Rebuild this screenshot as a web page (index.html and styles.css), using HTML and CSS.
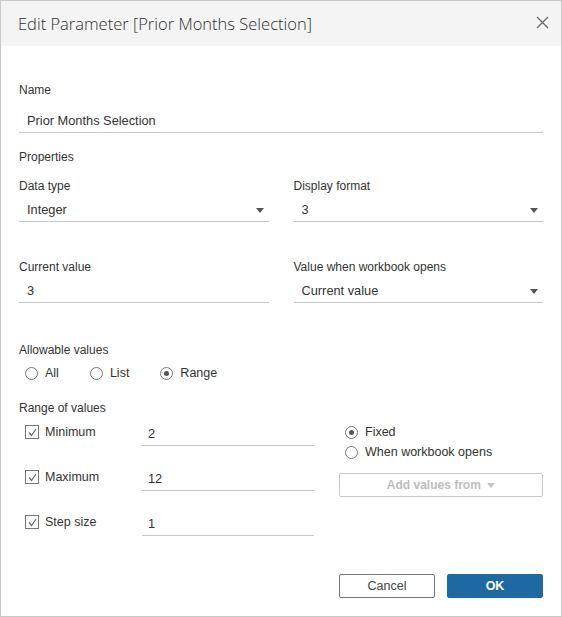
FILE: index.html
```html
<!DOCTYPE html>
<html lang="en">
<head>
    <meta charset="UTF-8">
    <title>Edit Parameter</title>
    <link rel="stylesheet" href="styles.css">
</head>
<body>
    <div class="dialog">
        <div class="dialog-header">
            <span class="dialog-title">Edit Parameter [Prior Months Selection]</span>
            <svg class="close-icon" width="13" height="13" viewBox="0 0 13 13">
                <path d="M1 1 L12 12 M12 1 L1 12" stroke="#666" stroke-width="1.3" fill="none"/>
            </svg>
        </div>

        <div class="dialog-body">
            <div class="label name-label">Name</div>
            <div class="field name-field">Prior Months Selection</div>

            <div class="label section-label">Properties</div>
            <div class="two-col">
                <div>
                    <div class="label">Data type</div>
                    <div class="field select">Integer <span class="arrow"></span></div>
                </div>
                <div>
                    <div class="label">Display format</div>
                    <div class="field select">3 <span class="arrow"></span></div>
                </div>
            </div>

            <div class="two-col current-row">
                <div>
                    <div class="label">Current value</div>
                    <div class="field">3</div>
                </div>
                <div>
                    <div class="label">Value when workbook opens</div>
                    <div class="field select">Current value <span class="arrow"></span></div>
                </div>
            </div>

            <div class="label allow-label">Allowable values</div>
            <div class="radio-row">
                <span class="radio-item"><span class="radio"></span>All</span>
                <span class="radio-item"><span class="radio"></span>List</span>
                <span class="radio-item"><span class="radio checked"></span>Range</span>
            </div>

            <div class="label range-label">Range of values</div>
            <div class="range-grid">
                <div class="range-left">
                    <div class="range-row">
                        <span class="check-label"><span class="checkbox"><svg width="11" height="11" viewBox="0 0 11 11"><path d="M2 5.5 L4.5 8.5 L9 2" stroke="#666" stroke-width="1.2" fill="none"/></svg></span>Minimum</span>
                        <div class="field range-field">2</div>
                    </div>
                    <div class="range-row">
                        <span class="check-label"><span class="checkbox"><svg width="11" height="11" viewBox="0 0 11 11"><path d="M2 5.5 L4.5 8.5 L9 2" stroke="#666" stroke-width="1.2" fill="none"/></svg></span>Maximum</span>
                        <div class="field range-field">12</div>
                    </div>
                    <div class="range-row">
                        <span class="check-label"><span class="checkbox"><svg width="11" height="11" viewBox="0 0 11 11"><path d="M2 5.5 L4.5 8.5 L9 2" stroke="#666" stroke-width="1.2" fill="none"/></svg></span>Step size</span>
                        <div class="field range-field">1</div>
                    </div>
                </div>
                <div class="range-right">
                    <span class="radio-item"><span class="radio checked"></span>Fixed</span>
                    <span class="radio-item"><span class="radio"></span>When workbook opens</span>
                    <div class="add-values">Add values from <span class="arrow light"></span></div>
                </div>
            </div>
        </div>

        <div class="dialog-footer">
            <button class="btn btn-cancel">Cancel</button>
            <button class="btn btn-ok">OK</button>
        </div>
    </div>
</body>
</html>
```
FILE: styles.css
```css
body {
    margin: 0;
    font-family: "Liberation Sans", Arial, sans-serif;
    font-size: 12px;
    color: #333;
}
.dialog {
    width: 560px;
    height: 615px;
    border: 1px solid #c9c9c9;
    display: flex;
    flex-direction: column;
    background: #fff;
}
.dialog-header {
    height: 45px;
    background: #f4f4f4;
    display: flex;
    align-items: center;
    justify-content: space-between;
    padding: 0 12px 0 17px;
    flex-shrink: 0;
}
.dialog-title {
    font-family: "Open Sans", "Liberation Sans", sans-serif;
    font-weight: 300;
    font-size: 16.5px;
    color: #2f2f2f;
    margin-top: -1px;
}
.close-icon {
    margin-top: -3px;
}
.dialog-body {
    padding: 36px 18px 0 18px;
}
.label {
    line-height: 16px;
    height: 16px;
}
.field {
    height: 23px;
    line-height: 23px;
    border-bottom: 1px solid #c8c8c8;
    padding-left: 8px;
    margin-top: 4px;
    position: relative;
    font-size: 12.8px;
}
.name-field {
    margin-top: 11px;
}
.section-label {
    margin-top: 16px;
    margin-bottom: 13px;
}
.two-col {
    display: grid;
    grid-template-columns: 1fr 1fr;
    column-gap: 25px;
}
.current-row {
    margin-top: 37px;
}
.arrow {
    position: absolute;
    right: 5px;
    top: 10px;
    width: 0;
    height: 0;
    border-left: 4px solid transparent;
    border-right: 4px solid transparent;
    border-top: 5px solid #555;
}
.arrow.light {
    position: static;
    display: inline-block;
    border-top-color: #c4c4c4;
    vertical-align: middle;
    margin-left: 3px;
}
.allow-label {
    margin-top: 39px;
}
.radio-row {
    display: flex;
    margin-top: 7px;
    padding-left: 6px;
}
.radio-item {
    display: flex;
    align-items: center;
    height: 16px;
    font-size: 12.5px;
}
.radio-row .radio-item {
    margin-right: 31px;
}
.radio {
    width: 11px;
    height: 11px;
    border: 1px solid #777;
    border-radius: 50%;
    margin-right: 7px;
    position: relative;
    box-sizing: content-box;
}
.radio.checked::after {
    content: "";
    position: absolute;
    left: 3px;
    top: 3px;
    width: 5px;
    height: 5px;
    border-radius: 50%;
    background: #555;
}
.range-label {
    margin-top: 19px;
}
.range-grid {
    display: grid;
    grid-template-columns: 295px 204px;
    column-gap: 25px;
    margin-top: 8px;
}
.range-row {
    display: flex;
    align-items: flex-start;
    height: 45px;
}
.check-label {
    width: 123px;
    display: flex;
    align-items: center;
    height: 16px;
    padding-left: 6px;
    box-sizing: border-box;
    font-size: 12.5px;
}
.checkbox {
    width: 12px;
    height: 12px;
    border: 1px solid #777;
    margin-right: 6px;
    display: flex;
    align-items: center;
    justify-content: center;
}
.range-field {
    flex: 1;
    margin-top: -2px;
    padding-left: 6px;
}
.range-right {
    display: flex;
    flex-direction: column;
    padding-left: 6px;
}
.range-right .radio-item {
    margin-bottom: 4px;
}
.add-values {
    margin-left: -6px;
    margin-top: 9px;
    height: 22px;
    line-height: 22px;
    border: 1px solid #c8c8c8;
    border-radius: 2px;
    text-align: center;
    color: #bdbdbd;
    font-weight: bold;
}
.dialog-footer {
    margin-top: auto;
    display: flex;
    justify-content: flex-end;
    gap: 12px;
    padding: 0 18px 18px 0;
}
.btn {
    width: 96px;
    height: 24px;
    font-family: "Liberation Sans", Arial, sans-serif;
    font-size: 12.5px;
    border-radius: 2px;
    cursor: pointer;
}
.btn-cancel {
    background: #fff;
    border: 1px solid #777;
    color: #444;
}
.btn-ok {
    background: #1f69a3;
    border: 1px solid #1f69a3;
    color: #fff;
    font-weight: bold;
}
```
